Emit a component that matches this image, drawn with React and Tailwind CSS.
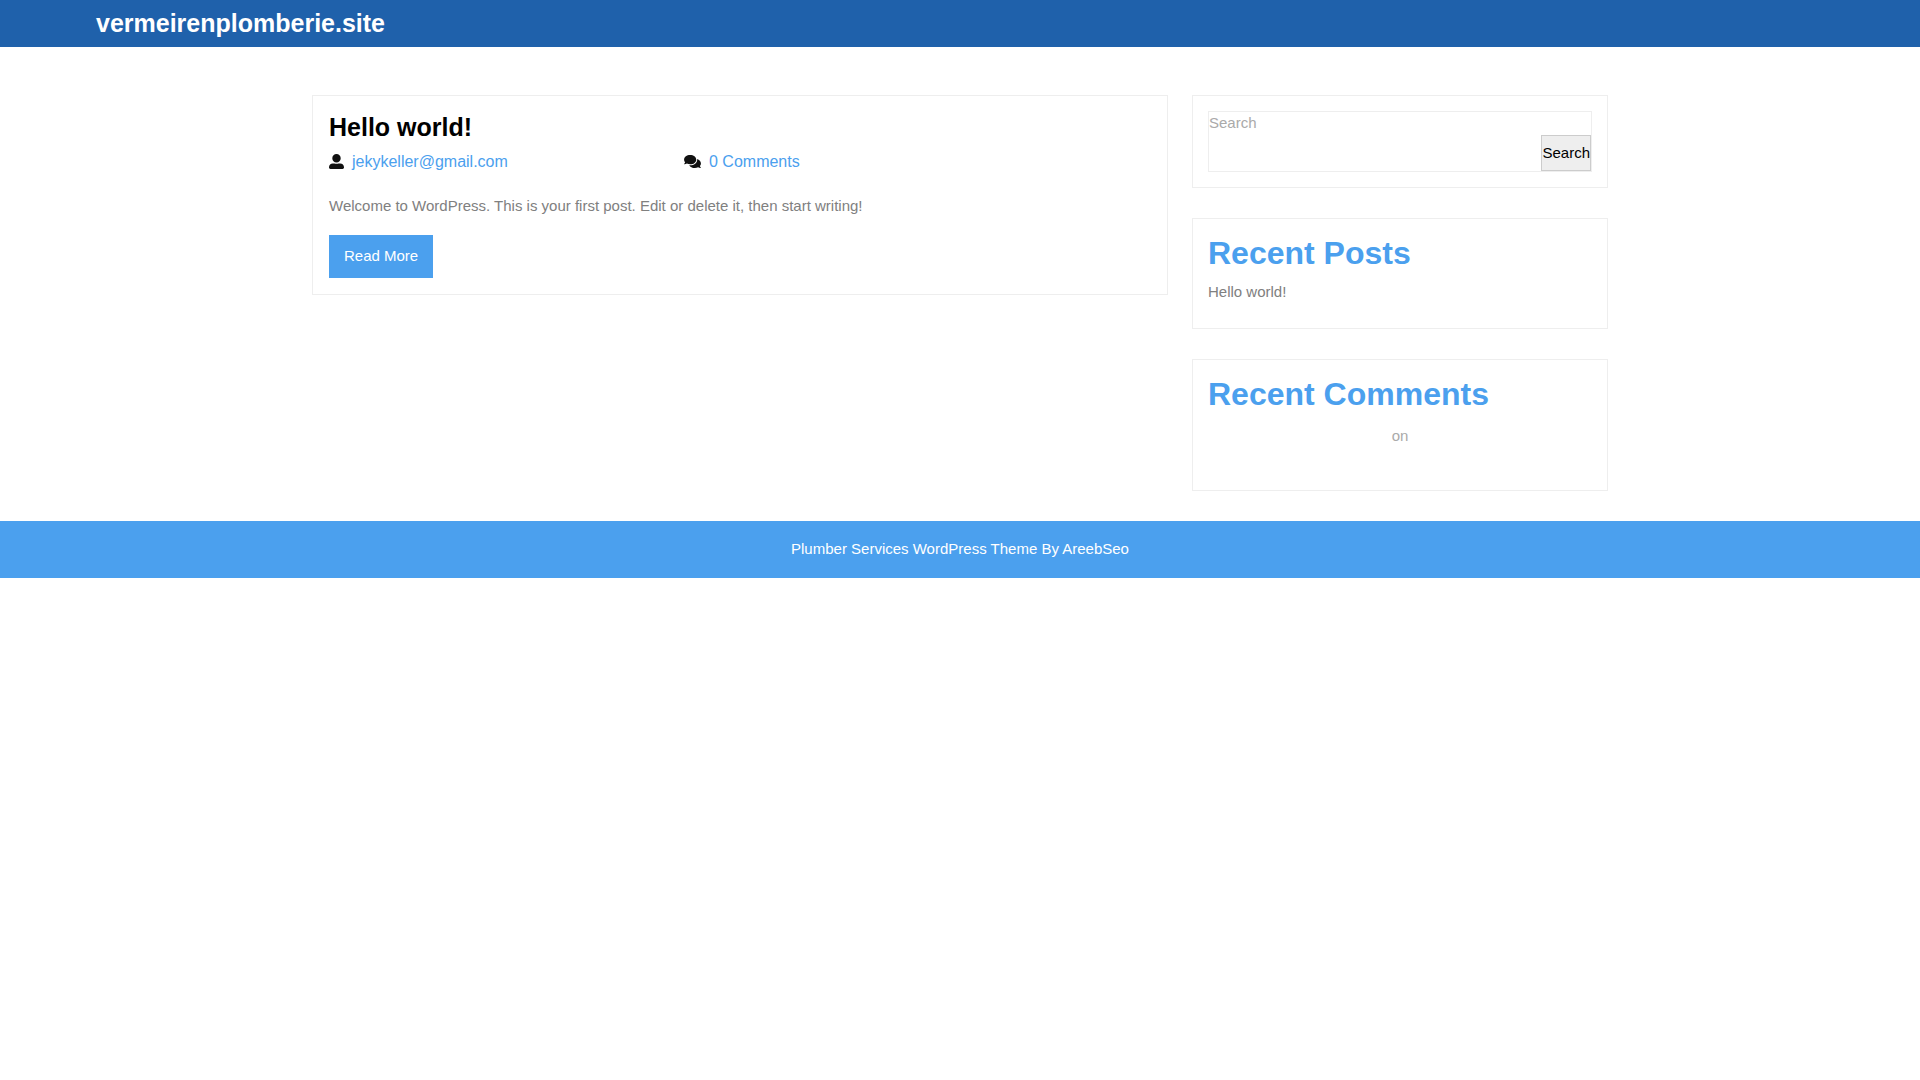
import { FaUserAlt, FaComments } from 'react-icons/fa';

function Widget({ title, children }) {
  return (
    <section className="mb-[30px] border border-[#eee] p-[15px]">
      {title && <h2 className="mb-2 text-[32px] leading-[38px] font-bold text-[#4ba0ee]">{title}</h2>}
      {children}
    </section>
  );
}

function SearchForm() {
  return (
    <form role="search" className="border border-[#eee]" onSubmit={(e) => e.preventDefault()}>
      <label htmlFor="search" className="mb-px block text-[#aaa]">Search</label>
      <div className="flex h-9">
        <input id="search" type="search" className="min-w-0 flex-1 outline-none" />
        <button type="submit" className="border border-[#ccc] bg-[#eee] pb-px text-black">Search</button>
      </div>
    </form>
  );
}

function Post() {
  return (
    <article className="border border-[#eee] p-4">
      <h2 className="mb-2 text-[25px] leading-[30px] font-bold text-black">
        <a href="#post">Hello world!</a>
      </h2>
      <div className="-mx-[15px] mb-5 flex text-base">
        <div className="w-5/12 px-[15px]">
          <FaUserAlt className="mr-2 inline h-[15px] w-[15px] align-[-2px] text-[#111]" />
          <a href="#author" className="text-[#4ba0ee]">jekykeller@gmail.com</a>
        </div>
        <div className="w-5/12 px-[15px]">
          <FaComments className="mr-2 inline h-[15px] w-[17px] align-[-2px] text-[#111]" />
          <a href="#comments" className="text-[#4ba0ee]">0 Comments</a>
        </div>
      </div>
      <p className="mb-[18px] leading-[23px]">Welcome to WordPress. This is your first post. Edit or delete it, then start writing!</p>
      <a href="#post" className="inline-block bg-[#4ba0ee] px-[15px] pt-[10px] pb-[11px] align-top text-white">Read More</a>
    </article>
  );
}

export default function App() {
  return (
    <div className="bg-white font-['Liberation_Sans',Arial,sans-serif] text-[15px] leading-[22px] text-[#808080]">
      <header className="bg-[#1f61ab] px-6 py-1 lg:px-24">
        <h1 className="text-[25px] leading-[39px] font-bold text-white">
          <a href="#home">vermeirenplomberie.site</a>
        </h1>
      </header>
      <main className="mx-auto mt-12 grid max-w-[1320px] items-start gap-x-6 px-3 lg:grid-cols-3">
        <div className="mb-[30px] lg:col-span-2">
          <Post />
        </div>
        <aside>
          <Widget>
            <SearchForm />
          </Widget>
          <Widget title="Recent Posts">
            <ul className="mb-[10px] leading-[23px]">
              <li><a href="#post">Hello world!</a></li>
            </ul>
          </Widget>
          <Widget title="Recent Comments">
            <p className="pt-1 pb-7 text-center text-[#aaa]">on</p>
          </Widget>
        </aside>
      </main>
      <footer className="bg-[#4ba0ee] pt-[17px] pb-[18px] text-center text-white">
        <p>Plumber Services WordPress Theme By AreebSeo</p>
      </footer>
    </div>
  );
}
